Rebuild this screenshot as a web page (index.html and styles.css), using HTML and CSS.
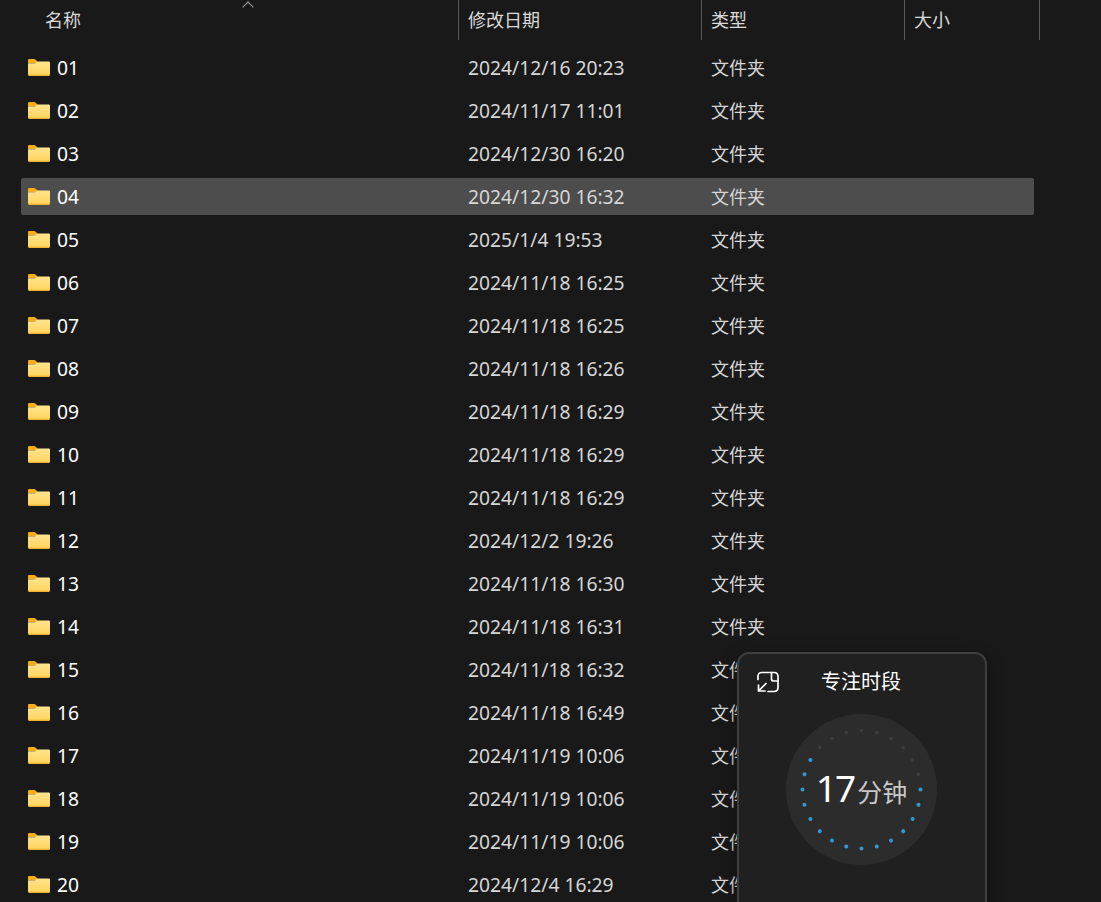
FILE: index.html
```html
<!DOCTYPE html>
<html lang="zh-CN">
<head>
  <meta charset="UTF-8">
  <title>文件列表</title>
  <link rel="stylesheet" href="styles.css">
</head>
<body>
  <svg class="defs" width="0" height="0">
    <defs>
      <linearGradient id="folder-body" x1="0" y1="0" x2="0" y2="1">
        <stop offset="0" stop-color="#ffe48f"/>
        <stop offset="0.85" stop-color="#ffd763"/>
        <stop offset="0.93" stop-color="#f6c145"/>
        <stop offset="1" stop-color="#e5a521"/>
      </linearGradient>
      <symbol id="folder" viewBox="0 0 22 17">
        <path d="M0 1.200C0 .5.5 0 1.200 0h5c.5 0 .9.2 1.200.5L9.500 2.600V4H0z" fill="#f5ae17"/>
        <path d="M0 4.200h7.200L9.200 2.400h11.600c.7 0 1.200.5 1.200 1.200v12.200c0 .7-.5 1.200-1.200 1.200H1.200C.5 17 0 16.500 0 15.800z" fill="url(#folder-body)"/>
      </symbol>
    </defs>
  </svg>

  <div class="list-header">
    <div class="col-head col-name">名称<span class="sort-arrow"></span></div>
    <div class="col-head col-date">修改日期</div>
    <div class="col-head col-type">类型</div>
    <div class="col-head col-size">大小</div>
  </div>

  <div class="file-list">
    <div class="row"><div class="name"><svg class="folder"><use href="#folder"/></svg>01</div><div class="date">2024/12/16 20:23</div><div class="type">文件夹</div></div>
    <div class="row"><div class="name"><svg class="folder"><use href="#folder"/></svg>02</div><div class="date">2024/11/17 11:01</div><div class="type">文件夹</div></div>
    <div class="row"><div class="name"><svg class="folder"><use href="#folder"/></svg>03</div><div class="date">2024/12/30 16:20</div><div class="type">文件夹</div></div>
    <div class="row selected"><div class="name"><svg class="folder"><use href="#folder"/></svg>04</div><div class="date">2024/12/30 16:32</div><div class="type">文件夹</div></div>
    <div class="row"><div class="name"><svg class="folder"><use href="#folder"/></svg>05</div><div class="date">2025/1/4 19:53</div><div class="type">文件夹</div></div>
    <div class="row"><div class="name"><svg class="folder"><use href="#folder"/></svg>06</div><div class="date">2024/11/18 16:25</div><div class="type">文件夹</div></div>
    <div class="row"><div class="name"><svg class="folder"><use href="#folder"/></svg>07</div><div class="date">2024/11/18 16:25</div><div class="type">文件夹</div></div>
    <div class="row"><div class="name"><svg class="folder"><use href="#folder"/></svg>08</div><div class="date">2024/11/18 16:26</div><div class="type">文件夹</div></div>
    <div class="row"><div class="name"><svg class="folder"><use href="#folder"/></svg>09</div><div class="date">2024/11/18 16:29</div><div class="type">文件夹</div></div>
    <div class="row"><div class="name"><svg class="folder"><use href="#folder"/></svg>10</div><div class="date">2024/11/18 16:29</div><div class="type">文件夹</div></div>
    <div class="row"><div class="name"><svg class="folder"><use href="#folder"/></svg>11</div><div class="date">2024/11/18 16:29</div><div class="type">文件夹</div></div>
    <div class="row"><div class="name"><svg class="folder"><use href="#folder"/></svg>12</div><div class="date">2024/12/2 19:26</div><div class="type">文件夹</div></div>
    <div class="row"><div class="name"><svg class="folder"><use href="#folder"/></svg>13</div><div class="date">2024/11/18 16:30</div><div class="type">文件夹</div></div>
    <div class="row"><div class="name"><svg class="folder"><use href="#folder"/></svg>14</div><div class="date">2024/11/18 16:31</div><div class="type">文件夹</div></div>
    <div class="row"><div class="name"><svg class="folder"><use href="#folder"/></svg>15</div><div class="date">2024/11/18 16:32</div><div class="type">文件夹</div></div>
    <div class="row"><div class="name"><svg class="folder"><use href="#folder"/></svg>16</div><div class="date">2024/11/18 16:49</div><div class="type">文件夹</div></div>
    <div class="row"><div class="name"><svg class="folder"><use href="#folder"/></svg>17</div><div class="date">2024/11/19 10:06</div><div class="type">文件夹</div></div>
    <div class="row"><div class="name"><svg class="folder"><use href="#folder"/></svg>18</div><div class="date">2024/11/19 10:06</div><div class="type">文件夹</div></div>
    <div class="row"><div class="name"><svg class="folder"><use href="#folder"/></svg>19</div><div class="date">2024/11/19 10:06</div><div class="type">文件夹</div></div>
    <div class="row"><div class="name"><svg class="folder"><use href="#folder"/></svg>20</div><div class="date">2024/12/4 16:29</div><div class="type">文件夹</div></div>
  </div>

  <!-- 专注时段 floating widget -->
  <div class="focus-widget">
    <div class="focus-title">
      <svg class="focus-expand" viewBox="0 0 24 24" fill="none" stroke="#fff" stroke-width="1.700" stroke-linecap="round" stroke-linejoin="round">
        <path d="M2 9.500V6a3.500 3.500 0 0 1 3.500-3.500h13A3.500 3.500 0 0 1 22 6v12a3.500 3.500 0 0 1-3.500 3.500H12"/>
        <path d="M15.500 2.500V9a2 2 0 0 0 2 2H22"/>
        <path d="M2.500 21L10 13.500M2.500 15v6H9"/>
      </svg>
      <span>专注时段</span>
    </div>
    <div class="focus-dial">
      <svg class="dial-dots" viewBox="0 0 151 151">
        <g class="dots-off">
          <circle cx="75.500" cy="16.500" r="1.800"/>
          <circle cx="75.500" cy="16.500" r="1.800" transform="rotate(15 75.500 75.500)"/>
          <circle cx="75.500" cy="16.500" r="1.800" transform="rotate(30 75.500 75.500)"/>
          <circle cx="75.500" cy="16.500" r="1.800" transform="rotate(45 75.500 75.500)"/>
          <circle cx="75.500" cy="16.500" r="1.800" transform="rotate(60 75.500 75.500)"/>
          <circle cx="75.500" cy="16.500" r="1.800" transform="rotate(75 75.500 75.500)"/>
          <circle cx="75.500" cy="16.500" r="1.800" transform="rotate(315 75.500 75.500)"/>
          <circle cx="75.500" cy="16.500" r="1.800" transform="rotate(330 75.500 75.500)"/>
          <circle cx="75.500" cy="16.500" r="1.800" transform="rotate(345 75.500 75.500)"/>
        </g>
        <g class="dots-on">
          <circle cx="75.500" cy="16.500" r="2" transform="rotate(90 75.500 75.500)"/>
          <circle cx="75.500" cy="16.500" r="2" transform="rotate(105 75.500 75.500)"/>
          <circle cx="75.500" cy="16.500" r="2" transform="rotate(120 75.500 75.500)"/>
          <circle cx="75.500" cy="16.500" r="2" transform="rotate(135 75.500 75.500)"/>
          <circle cx="75.500" cy="16.500" r="2" transform="rotate(150 75.500 75.500)"/>
          <circle cx="75.500" cy="16.500" r="2" transform="rotate(165 75.500 75.500)"/>
          <circle cx="75.500" cy="16.500" r="2" transform="rotate(180 75.500 75.500)"/>
          <circle cx="75.500" cy="16.500" r="2" transform="rotate(195 75.500 75.500)"/>
          <circle cx="75.500" cy="16.500" r="2" transform="rotate(210 75.500 75.500)"/>
          <circle cx="75.500" cy="16.500" r="2" transform="rotate(225 75.500 75.500)"/>
          <circle cx="75.500" cy="16.500" r="2" transform="rotate(240 75.500 75.500)"/>
          <circle cx="75.500" cy="16.500" r="2" transform="rotate(255 75.500 75.500)"/>
          <circle cx="75.500" cy="16.500" r="2" transform="rotate(270 75.500 75.500)"/>
          <circle cx="75.500" cy="16.500" r="2" transform="rotate(285 75.500 75.500)"/>
          <circle cx="75.500" cy="16.500" r="2" transform="rotate(300 75.500 75.500)"/>
        </g>
      </svg>
      <div class="dial-value"><span class="dial-num">17</span><span class="dial-unit">分钟</span></div>
    </div>
  </div>
</body>
</html>
```

FILE: styles.css
```css
html, body {
  height: 100%;
}
body {
  margin: 0;
  padding: 0;
  background-color: #191919;
  color: #d6d6d6;
  font-family: "Noto Sans", "Noto Sans CJK SC", sans-serif;
  font-size: 19.25px;
  overflow: hidden;
  position: relative;
}
.defs {
  display: block;
  height: 0;
}
.list-header {
  display: grid;
  grid-template-columns: 459px 243px 203px 135px;
  height: 40px;
  width: 1040px;
}
.col-head {
  border-right: 1px solid #5a5a5a;
  box-sizing: border-box;
  line-height: 40px;
  padding-left: 9px;
  position: relative;
  color: #d9d9d9;
  font-size: 18px;
}
.col-name {
  padding-left: 45px;
}
.sort-arrow {
  position: absolute;
  left: 244px;
  top: 3px;
  width: 7px;
  height: 7px;
  border-left: 1px solid #a0a0a0;
  border-top: 1px solid #a0a0a0;
  transform: rotate(45deg);
}
.file-list {
  display: flex;
  flex-direction: column;
  gap: 6px;
  margin: 9px 0 0 21px;
  width: 1013px;
}
.row {
  display: grid;
  grid-template-columns: 437px 243px 1fr;
  align-items: center;
  flex: none;
  height: 37px;
  border-radius: 2px;
}
.row.selected {
  background-color: #4d4d4d;
}
.name {
  display: flex;
  align-items: center;
  padding-left: 7px;
  color: #fff;
}
.folder {
  width: 22px;
  height: 17px;
  margin: -1px 7px 0 0;
}
.date {
  padding-left: 10px;
}
.type {
  padding: 0 0 2px 10px;
  font-size: 18px;
}
.focus-widget {
  position: absolute;
  left: 737px;
  top: 652px;
  width: 250px;
  height: 280px;
  box-sizing: border-box;
  background-color: #202020;
  border: 2px solid #3e3e3e;
  border-radius: 12px;
  box-shadow: 0 4px 16px rgba(0,0,0,0.4);
}
.focus-title {
  position: relative;
  text-align: center;
  margin-top: 14px;
  padding-right: 2px;
  line-height: 28px;
  color: #fff;
  font-size: 20px;
}
.focus-expand {
  position: absolute;
  left: 17px;
  top: 2px;
  width: 24px;
  height: 24px;
}
.focus-dial {
  position: relative;
  width: 151px;
  height: 151px;
  margin: 18px 0 0 47px;
  border-radius: 50%;
  background-color: #2c2c2c;
}
.dial-dots {
  position: absolute;
  left: 0;
  top: 0;
  width: 151px;
  height: 151px;
}
.dots-off {
  fill: #3d3d3d;
}
.dots-on {
  fill: #3399cc;
}
.dial-value {
  display: flex;
  align-items: baseline;
  justify-content: center;
  height: 100%;
  line-height: 148px;
  gap: 3px;
}
.dial-num {
  color: #fff;
  font-size: 37px;
  letter-spacing: -2px;
}
.dial-unit {
  color: #c8c8c8;
  font-size: 25px;
}
```
